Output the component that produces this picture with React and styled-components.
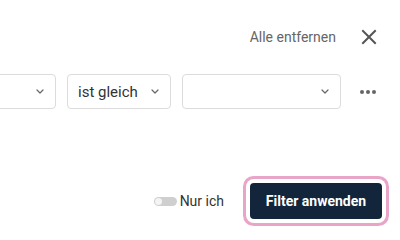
import React, { useState } from 'react';
import styled, { createGlobalStyle } from 'styled-components';

const GlobalStyle = createGlobalStyle`
  body {
    margin: 0;
    background: #ffffff;
    font-family: Roboto, "Liberation Sans", sans-serif;
  }
`;

const Panel = styled.div`
  width: 400px;
  height: 240px;
  overflow: hidden;
  background: #ffffff;
  display: flex;
  flex-direction: column;
`;

const Header = styled.div`
  height: 34px;
  margin-top: 20px;
  padding-right: 22px;
  display: flex;
  justify-content: flex-end;
  align-items: center;
  gap: 24px;
`;

const TextButton = styled.button`
  border: none;
  background: none;
  padding: 0;
  font-family: inherit;
  font-size: 14px;
  color: #666666;
  cursor: pointer;
`;

const IconButton = styled.button`
  flex-shrink: 0;
  border: none;
  background: none;
  padding: 0;
  width: ${({ size }) => size}px;
  height: ${({ size }) => size}px;
  display: flex;
  align-items: center;
  justify-content: center;
  cursor: pointer;
`;

const FilterRow = styled.div`
  margin-top: 20px;
  height: 35px;
  padding-right: 16px;
  display: flex;
  justify-content: flex-end;
  align-items: center;
  gap: 11px;
`;

const Select = styled.div`
  flex-shrink: 0;
  width: ${({ width }) => width}px;
  height: 35px;
  box-sizing: border-box;
  border: 1px solid #dcdcdc;
  border-radius: 4px;
  background: #ffffff;
  display: flex;
  align-items: center;
  justify-content: space-between;
  padding: 0 11px 0 10px;
  font-size: 15px;
  color: #333333;
`;

const Dots = styled.div`
  display: flex;
  gap: 2px;
  span {
    width: 4px;
    height: 4px;
    border-radius: 50%;
    background: #666666;
  }
`;

const Footer = styled.div`
  margin-top: 74px;
  padding-right: 18px;
  display: flex;
  justify-content: flex-end;
  align-items: center;
`;

const ToggleLabel = styled.label`
  display: flex;
  align-items: center;
  gap: 3px;
  font-size: 14px;
  color: #333333;
  margin-right: 26px;
  cursor: pointer;
`;

const Track = styled.span`
  position: relative;
  width: 23px;
  height: 9px;
  border-radius: 5px;
  background: ${({ on }) => (on ? '#13263a' : '#cfcfcf')};
`;

const Thumb = styled.span`
  position: absolute;
  top: 1px;
  left: ${({ on }) => (on ? '15px' : '1px')};
  width: 7px;
  height: 7px;
  border-radius: 50%;
  background: #f4f4f4;
`;

const PrimaryButton = styled.button`
  height: 36px;
  width: 132px;
  border: none;
  border-radius: 4px;
  background: #12253a;
  color: #ffffff;
  font-family: inherit;
  font-size: 14px;
  font-weight: 700;
  box-shadow: 0 0 0 4px #ffffff, 0 0 0 7px #e9a5c8;
  cursor: pointer;
`;

const Chevron = () => (
  <svg width="8" height="5" viewBox="0 0 8 5" fill="none">
    <path d="M1 1l3 3 3-3" stroke="#666" strokeWidth="1.2" strokeLinecap="round" strokeLinejoin="round" />
  </svg>
);

const CloseIcon = () => (
  <svg width="16" height="16" viewBox="0 0 16 16" fill="none">
    <path d="M2 2l12 12M14 2L2 14" stroke="#555" strokeWidth="2" strokeLinecap="square" />
  </svg>
);

const App = () => {
  const [onlyMe, setOnlyMe] = useState(false);

  return (
    <>
      <GlobalStyle />
      <Panel>
        <Header>
          <TextButton>Alle entfernen</TextButton>
          <IconButton size={18}>
            <CloseIcon />
          </IconButton>
        </Header>
        <FilterRow>
          <Select width={150}>
            <span />
            <Chevron />
          </Select>
          <Select width={104}>
            <span>ist gleich</span>
            <Chevron />
          </Select>
          <Select width={159}>
            <span />
            <Chevron />
          </Select>
          <IconButton size={32}>
            <Dots>
              <span />
              <span />
              <span />
            </Dots>
          </IconButton>
        </FilterRow>
        <Footer>
          <ToggleLabel onClick={() => setOnlyMe(!onlyMe)}>
            <Track on={onlyMe}>
              <Thumb on={onlyMe} />
            </Track>
            Nur ich
          </ToggleLabel>
          <PrimaryButton>Filter anwenden</PrimaryButton>
        </Footer>
      </Panel>
    </>
  );
};

export default App;
